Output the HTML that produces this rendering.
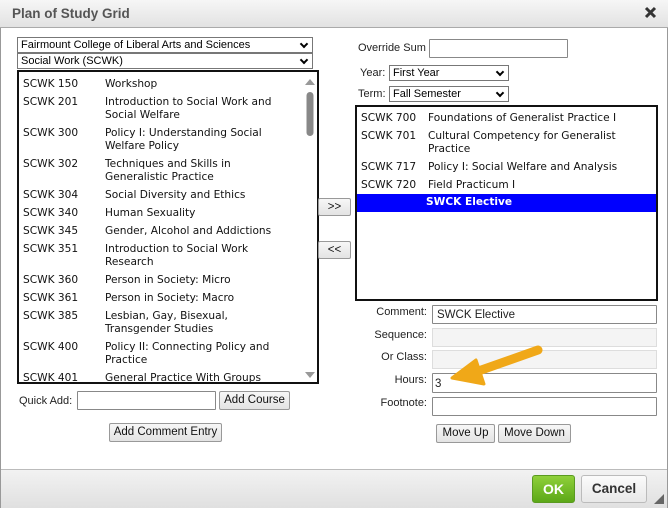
<!DOCTYPE html>
<html><head><meta charset="utf-8"><style>
*{box-sizing:border-box;margin:0;padding:0}
body{width:668px;height:508px;overflow:hidden;background:#fff;font-family:"Liberation Sans",Arial,sans-serif;font-size:11px;color:#222;position:relative}
.a{position:absolute}
.title{left:0;top:0;width:668px;height:28px;background:linear-gradient(#f6f6f6,#e2e2e2);border-bottom:1px solid #aaa;font-weight:bold;font-size:13.5px;color:#555;padding:6px 0 0 12px}
.sel{border:1px solid #777;background:#fff;font-size:11px;padding:1px 3px;height:16px;line-height:13px;color:#000}
.sel:after{content:"";position:absolute;right:5px;top:3px;width:4px;height:4px;border-right:2px solid #000;border-bottom:2px solid #000;transform:rotate(45deg)}
.list{border:2px solid #111;background:#fff;font-family:"DejaVu Sans",Verdana,sans-serif;font-size:10.6px;color:#111;overflow:hidden}
.row{position:relative;padding:2px 0 3px 0;line-height:13px}
.row .c{position:absolute;left:3px}
.inp{border:1px solid #888;background:#fff;border-radius:1px}
.dis{border:1px solid #ddd;background:#f4f4f4}
.btn{border:1px solid #999;border-radius:2px;background:linear-gradient(#f7f7f7,#e3e3e3);font-size:11.5px;text-align:center;line-height:16px;color:#111}
.lbl{font-size:11px;color:#222;text-align:right}
</style></head><body>
<div class="a" style="left:0;top:0;width:1px;height:508px;background:#999"></div>
<div class="a" style="right:0;top:0;width:1px;height:508px;background:#999"></div>
<div class="a title">Plan of Study Grid</div>
<svg class="a" style="left:644px;top:6px" width="13" height="13"><path d="M2 2L11 11M11 2L2 11" stroke="#333" stroke-width="3"/></svg>

<div class="a sel" style="left:17px;top:37px;width:296px">Fairmount College of Liberal Arts and Sciences</div>
<div class="a sel" style="left:17px;top:53px;width:296px">Social Work (SCWK)</div>

<div class="a list" style="left:17px;top:70px;width:302px;height:314px">
<div style="position:absolute;left:1px;top:4px;width:280px">
<div class="row"><span class="c">SCWK 150</span><div style="margin-left:85px">Workshop</div></div>
<div class="row"><span class="c">SCWK 201</span><div style="margin-left:85px">Introduction to Social Work and<br>Social Welfare</div></div>
<div class="row"><span class="c">SCWK 300</span><div style="margin-left:85px">Policy I: Understanding Social<br>Welfare Policy</div></div>
<div class="row"><span class="c">SCWK 302</span><div style="margin-left:85px">Techniques and Skills in<br>Generalistic Practice</div></div>
<div class="row"><span class="c">SCWK 304</span><div style="margin-left:85px">Social Diversity and Ethics</div></div>
<div class="row"><span class="c">SCWK 340</span><div style="margin-left:85px">Human Sexuality</div></div>
<div class="row"><span class="c">SCWK 345</span><div style="margin-left:85px">Gender, Alcohol and Addictions</div></div>
<div class="row"><span class="c">SCWK 351</span><div style="margin-left:85px">Introduction to Social Work<br>Research</div></div>
<div class="row"><span class="c">SCWK 360</span><div style="margin-left:85px">Person in Society: Micro</div></div>
<div class="row"><span class="c">SCWK 361</span><div style="margin-left:85px">Person in Society: Macro</div></div>
<div class="row"><span class="c">SCWK 385</span><div style="margin-left:85px">Lesbian, Gay, Bisexual,<br>Transgender Studies</div></div>
<div class="row"><span class="c">SCWK 400</span><div style="margin-left:85px">Policy II: Connecting Policy and<br>Practice</div></div>
<div class="row"><span class="c">SCWK 401</span><div style="margin-left:85px">General Practice With Groups</div></div>
</div>
<svg class="a" style="left:285px;top:4px" width="12" height="304"><path d="M1 9L6 3L11 9Z" fill="#999"/><rect x="2.5" y="16" width="7" height="44" rx="3.5" fill="#888"/><path d="M1 296L6 302L11 296Z" fill="#999"/></svg>
</div>

<div class="a btn" style="left:318px;top:198px;width:33px;height:18px">&gt;&gt;</div>
<div class="a btn" style="left:318px;top:241px;width:33px;height:18px">&lt;&lt;</div>

<div class="a" style="left:19px;top:395px;font-size:11px">Quick Add:</div>
<div class="a inp" style="left:77px;top:391px;width:139px;height:19px"></div>
<div class="a btn" style="left:219px;top:391px;width:71px;height:19px">Add Course</div>
<div class="a btn" style="left:109px;top:423px;width:113px;height:19px">Add Comment Entry</div>

<div class="a" style="left:358px;top:42px;font-size:11px">Override Sum</div>
<div class="a inp" style="left:429px;top:39px;width:139px;height:19px"></div>
<div class="a" style="left:360px;top:67px;font-size:11px">Year:</div>
<div class="a sel" style="left:389px;top:65px;width:120px">First Year</div>
<div class="a" style="left:358px;top:88px;font-size:11px">Term:</div>
<div class="a sel" style="left:389px;top:86px;width:120px">Fall Semester</div>

<div class="a list" style="left:355px;top:105px;width:303px;height:196px">
<div style="position:absolute;left:4px;top:3px;width:295px">
<div class="row"><span class="c" style="left:0">SCWK 700</span><div style="margin-left:67px">Foundations of Generalist Practice I</div></div>
<div class="row"><span class="c" style="left:0">SCWK 701</span><div style="margin-left:67px">Cultural Competency for Generalist<br>Practice</div></div>
<div class="row"><span class="c" style="left:0">SCWK 717</span><div style="margin-left:67px">Policy I: Social Welfare and Analysis</div></div>
<div class="row"><span class="c" style="left:0">SCWK 720</span><div style="margin-left:67px">Field Practicum I</div></div>
</div>
<div class="a" style="left:0;top:87px;width:299px;height:18px;background:#0000ff;color:#fff;font-weight:bold;padding:2px 0 0 69px">SWCK Elective</div>
</div>

<div class="a lbl" style="left:340px;top:306px;width:87px">Comment:</div>
<div class="a inp" style="left:432px;top:305px;width:225px;height:19px;padding:3px 4px;font-size:11.5px">SWCK Elective</div>
<div class="a lbl" style="left:340px;top:329px;width:87px">Sequence:</div>
<div class="a dis" style="left:432px;top:328px;width:225px;height:19px"></div>
<div class="a lbl" style="left:340px;top:351px;width:87px">Or Class:</div>
<div class="a dis" style="left:432px;top:350px;width:225px;height:19px"></div>
<div class="a lbl" style="left:340px;top:374px;width:87px">Hours:</div>
<div class="a inp" style="left:432px;top:373px;width:225px;height:20px;padding:4px 2px;font-size:11.5px">3</div>
<div class="a lbl" style="left:340px;top:397px;width:87px">Footnote:</div>
<div class="a inp" style="left:432px;top:397px;width:225px;height:19px"></div>
<div class="a btn" style="left:436px;top:424px;width:59px;height:19px">Move Up</div>
<div class="a btn" style="left:498px;top:424px;width:73px;height:19px">Move Down</div>

<svg class="a" style="left:440px;top:340px" width="110" height="50"><path d="M98 10L30 34" stroke="#f0a818" stroke-width="9" stroke-linecap="round"/><path d="M12 38L36 20L44 44Z" fill="#f0a818" stroke="#f0a818" stroke-width="3" stroke-linejoin="round"/></svg>

<div class="a" style="left:1px;top:469px;width:666px;height:39px;background:linear-gradient(#f2f2f2,#e0e0e0);border-top:1px solid #bbb"></div>
<div class="a" style="left:532px;top:475px;width:43px;height:28px;background:linear-gradient(#8fd03a,#5ca818);border:1px solid #5a9a20;border-radius:3px;color:#fff;font-weight:bold;font-size:14px;text-align:center;line-height:26px">OK</div>
<div class="a" style="left:581px;top:475px;width:66px;height:28px;background:linear-gradient(#fbfbfb,#e8e8e8);border:1px solid #bbb;border-radius:3px;color:#333;font-weight:bold;font-size:13.5px;text-align:center;line-height:26px">Cancel</div>
<svg class="a" style="left:653px;top:493px" width="12" height="12"><path d="M11 1L11 11L1 11Z" fill="#666"/></svg>
</body></html>
